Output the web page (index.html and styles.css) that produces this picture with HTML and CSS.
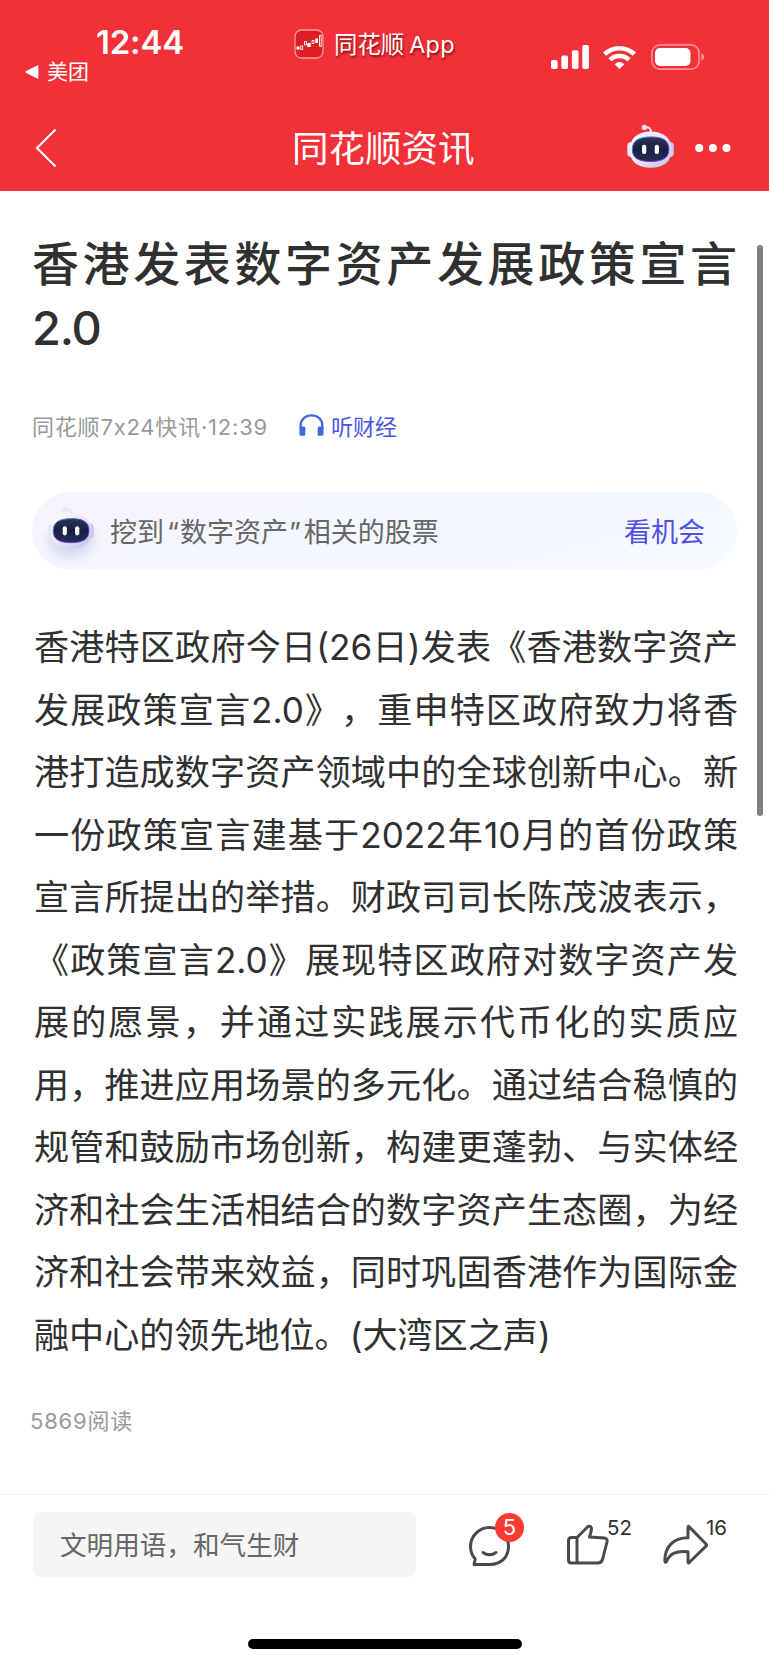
FILE: index.html
```html
<!DOCTYPE html>
<html lang="zh-CN">
<head>
<meta charset="utf-8">
<title>同花顺资讯</title>
<link rel="stylesheet" href="styles.css">
</head>
<body>
<svg class="defs" width="0" height="0" aria-hidden="true">
  <defs>
    <linearGradient id="shell" x1="0" y1="0" x2="1" y2="1"><stop offset="0" stop-color="#fff"/><stop offset=".55" stop-color="#e2e3f7"/><stop offset="1" stop-color="#bfc0e8"/></linearGradient>
    <linearGradient id="rim" x1="0" y1="0" x2="1" y2="1"><stop offset="0" stop-color="#58c8f0"/><stop offset=".4" stop-color="#5a3fc0"/><stop offset="1" stop-color="#8a3df0"/></linearGradient>
    <linearGradient id="visor" x1="0" y1="0" x2="0" y2="1"><stop offset="0" stop-color="#2c3656"/><stop offset=".5" stop-color="#171f42"/><stop offset="1" stop-color="#262d55"/></linearGradient>
    <symbol id="bot" viewBox="0 0 49 46">
      <path d="M19 4.400c4-.6 6 1 6 5" fill="none" stroke="#e4e4f8" stroke-width="2"/>
      <circle cx="18.400" cy="4.400" r="2.700" fill="#e9e9fb"/>
      <rect x="1.300" y="19" width="8" height="15" rx="4" fill="#e6e6fa"/>
      <rect x="39.800" y="19" width="8" height="15" rx="4" fill="#c6c7ee"/>
      <path d="M24.600 8.600C37 8.600 45.800 15 45.800 27c0 12-9 17.800-21.200 17.800S3.600 39 3.600 27c0-12 8.800-18.400 21-18.400z" fill="url(#shell)"/>
      <path d="M24.600 13.900c12 0 18.300 3.500 18.300 12.300s-6.300 12.300-18.300 12.300S6.300 35 6.300 26.200s6.300-12.300 18.300-12.300z" fill="url(#visor)" stroke="url(#rim)" stroke-width="1"/>
      <rect x="16" y="21.700" width="4.300" height="9.400" rx="2.100" fill="#fff"/>
      <rect x="28.700" y="21.700" width="4.300" height="9.400" rx="2.100" fill="#fff"/>
    </symbol>
  </defs>
</svg>
<div class="screen">
  <header class="top">
    <div class="status">
      <div class="clock">
        <div class="time">12:44</div>
        <div class="return"><svg width="14" height="14" viewBox="0 0 14 14"><path d="M12.500 1.200v11.600L1.200 7z" fill="#fff" stroke="#fff" stroke-width="1.800" stroke-linejoin="round"/></svg><span>美团</span></div>
      </div>
      <div class="source">
        <svg width="30" height="30" viewBox="0 0 30 30"><rect x="1" y="1" width="28" height="28" rx="6.500" fill="#dd1f25" stroke="#f79a9c" stroke-width="1.300"/><path d="M2.500 17.500h3v3h-3zM13.300 14h3.400v4h-3.400zM21.300 9.500H24v4.500h-2.700z" fill="#fff"/><path d="M6.700 17h2v3.500h-2zM10.500 12.500h2v3.500h-2zM18 11.500h2v3h-2zM25.500 6.500h1.700v11h-1.700z" fill="none" stroke="#fff" stroke-width=".9"/></svg>
        <span>同花顺<span class="latin">App</span></span>
      </div>
      <div class="signals">
        <svg width="38" height="24" viewBox="0 0 38 24" fill="#fff"><rect y="15" width="6.600" height="9" rx="1.800"/><rect x="10.400" y="10.500" width="6.600" height="13.500" rx="1.800"/><rect x="20.900" y="5.300" width="6.600" height="18.700" rx="1.800"/><rect x="31.300" y="0" width="6.600" height="24" rx="1.800"/></svg>
        <svg width="33" height="24" viewBox="0 0 33 24" fill="none" stroke="#fff"><path d="M1.600 9.200a21.500 21.500 0 0 1 29.800 0" stroke-width="4.600"/><path d="M7 14.900a13.700 13.700 0 0 1 19 0" stroke-width="4.600"/><path d="M11.600 19.200q4.900-4.300 9.800 0l-4.900 4.800z" fill="#fff" stroke="none"/></svg>
        <svg width="54" height="26" viewBox="0 0 54 26"><rect x=".9" y=".9" width="47.200" height="24.200" rx="8" fill="none" stroke="#fa9295" stroke-width="1.600"/><rect x="4" y="4" width="35.500" height="18" rx="5" fill="#fff"/><path d="M50.300 9.300q3 1.300 3 3.700t-3 3.700z" fill="#fa9295"/></svg>
      </div>
    </div>
    <nav class="nav">
      <svg class="back" width="22" height="40" viewBox="0 0 22 40"><path d="M20.500 1.500L2 20l18.500 18.500" fill="none" stroke="#fff" stroke-width="2.200"/></svg>
      <h1 class="channel">同花顺资讯</h1>
      <div class="tools">
        <svg class="tools-bot" width="49" height="46"><use href="#bot"/></svg>
        <svg width="36" height="8" viewBox="0 0 36 8" fill="#fff"><circle cx="4.200" cy="4" r="4"/><circle cx="17.900" cy="4" r="4"/><circle cx="31.500" cy="4" r="4"/></svg>
      </div>
    </nav>
  </header>

  <main class="article">
    <h2 class="headline"><span>香港发表数字资产发展政策宣言</span><span class="version">2.0</span></h2>
    <div class="meta">
      <span class="origin">同花顺7x24快讯·12:39</span>
      <a class="listen"><svg width="25" height="22" viewBox="0 0 25 22"><path d="M1.600 15v-3.500C1.600 5.200 6.500 1.300 12.500 1.300s10.900 3.900 10.900 10.200V15" fill="none" stroke="#4068e0" stroke-width="2.300"/><rect x=".5" y="12.500" width="5.800" height="9.200" rx="1.500" fill="#4068e0"/><rect x="18.700" y="12.500" width="5.800" height="9.200" rx="1.500" fill="#4068e0"/></svg><span>听财经</span></a>
    </div>
    <div class="promo">
      <svg class="promo-bot" width="48" height="45"><use href="#bot"/></svg>
      <span class="promo-text">挖到<span class="open">“</span>数字资产<span class="close">”</span>相关的股票</span>
      <a class="promo-link">看机会</a>
    </div>
    <p class="body">
      <span>香港特区政府今日(26日)发表《香港数字资产</span>
      <span>发展政策宣言2.0》，重申特区政府致力将香</span>
      <span>港打造成数字资产领域中的全球创新中心。新</span>
      <span>一份政策宣言建基于2022年10月的首份政策</span>
      <span>宣言所提出的举措。财政司司长陈茂波表示，</span>
      <span>《政策宣言2.0》展现特区政府对数字资产发</span>
      <span>展的愿景，并通过实践展示代币化的实质应</span>
      <span>用，推进应用场景的多元化。通过结合稳慎的</span>
      <span>规管和鼓励市场创新，构建更蓬勃、与实体经</span>
      <span>济和社会生活相结合的数字资产生态圈，为经</span>
      <span>济和社会带来效益，同时巩固香港作为国际金</span>
      <span class="last">融中心的领先地位。(大湾区之声)</span>
    </p>
    <div class="reads">5869阅读</div>
  </main>
  <div class="scrollbar"></div>

  <footer class="bottom">
    <div class="actions">
      <div class="comment-box">文明用语，和气生财</div>
      <div class="action comment">
        <svg width="42" height="42" viewBox="0 0 42 42" fill="none" stroke="#4a4a4a" stroke-width="3" stroke-linejoin="round" stroke-linecap="round"><path d="M5 39.500l1.300-5.500C3 30.500 1.500 26.500 1.500 21.500a19 19 0 0 1 38 0c0 10.500-7.500 18-18.500 18z"/><path d="M14 27.500q6.500 4.500 13 0"/></svg>
        <span class="badge">5</span>
      </div>
      <div class="action like">
        <svg width="42" height="40" viewBox="0 0 42 40" fill="none" stroke="#4a4a4a" stroke-width="3" stroke-linejoin="round" stroke-linecap="round"><path d="M10 12.500H4.500q-3 0-3 3v19.500q0 3 3 3H30.500q4 0 5-3.500l4.500-17.500q.8-3.500-2.800-4L22.500 12q1.500-4 2-8 0-3.500-3.500-2.500L10 12.500V38"/></svg>
        <span class="count">52</span>
      </div>
      <div class="action share">
        <svg width="46" height="40" viewBox="0 0 46 40" fill="none" stroke="#4a4a4a" stroke-width="3" stroke-linejoin="round"><path d="M25 2.200q0-1.500 1.200-.3L43 19q1.200 1.200 0 2.200L26.200 37.500q-1.200 1-1.200-.4V26.700C13 25.500 7 28.500 3.500 36.500q-1.500 2-1.700-1C2 22 10 12.800 25 12.800z"/></svg>
        <span class="count">16</span>
      </div>
    </div>
    <div class="home"></div>
  </footer>
</div>
</body>
</html>
```

FILE: styles.css
```css
* { box-sizing: border-box; }
body {
  margin: 0;
  background: #fff;
  color: #303030;
  font-family: Inter, "Noto Sans CJK SC", sans-serif;
  text-spacing-trim: space-all;
}
svg { display: block; flex: none; overflow: visible; }
.defs { position: absolute; }
.screen {
  position: relative;
  display: flex;
  flex-direction: column;
  width: 769px;
  height: 1665px;
  overflow: hidden;
  white-space: nowrap;
}

.top { height: 191px; flex: none; background: #f23038; color: #fff; }
.status { display: grid; grid-template-columns: 294px 257px 1fr; height: 104px; }
.clock { padding: 24px 0 0 25px; }
.time { padding-left: 71px; font-size: 33px; font-weight: 600; line-height: 36px; letter-spacing: -.2px; }
.return { display: flex; align-items: center; gap: 8px; height: 24px; font-size: 21px; line-height: 24px; }
.source { display: flex; align-items: center; gap: 10px; height: 30px; margin-top: 29px; font-size: 23.400px; text-shadow: 1px 2px 2px rgba(90, 0, 0, .65); }
.source > span { margin-top: -2px; }
.latin { margin-left: 5px; letter-spacing: .3px; }
.signals { display: flex; align-items: center; height: 26px; margin-top: 44px; }
.signals svg:nth-child(2) { margin: 0 15px 0 14px; }
.nav { display: grid; grid-template-columns: 292px 334px 1fr; align-items: center; height: 87px; }
.back { margin-left: 35px; }
.channel { margin: 2px 0 0; font-size: 36.500px; font-weight: 400; line-height: 50px; }
.tools { display: flex; align-items: center; gap: 20px; }
.tools-bot { margin-top: -3px; }

.article { flex: none; height: 1303px; padding: 41px 32px 0; }
.headline { margin: 0; width: 705px; font-size: 47px; font-weight: 500; line-height: 64px; }
.headline span { display: block; }
.headline span:first-child { text-align-last: justify; }
.headline .version { letter-spacing: -1.200px; }
.meta { display: flex; align-items: center; height: 30px; margin-top: 50px; font-size: 22px; color: #999; }
.origin { width: 267px; letter-spacing: .8px; }
.listen { display: flex; align-items: center; gap: 7px; color: #4a52e6; }
.promo {
  display: flex;
  align-items: center;
  width: 705px;
  height: 78px;
  margin-top: 52px;
  padding: 0 32px 2px 15px;
  border-radius: 39px;
  background: linear-gradient(165deg, #f8f3fe 0%, #f4f6fe 35%, #f3f8ff 70%, #f5fcff 100%);
  font-size: 27px;
}
.promo-bot { margin-top: -6px; filter: drop-shadow(0 9px 5px rgba(90, 100, 190, .18)); }
.promo-text { margin-left: 15px; color: #666; }
.open { margin: 0 1px 0 3px; }
.close { margin: 0 3px 0 1px; }
.promo-link { margin-left: auto; color: #5250e6; }
.body { width: 704px; margin: 46px 0 0 2px; font-size: 35.100px; line-height: 62.500px; }
.body span { display: block; text-align-last: justify; }
.body .last { text-align-last: left; }
.reads { margin: 40px 0 0 -2px; font-size: 22px; line-height: 30px; letter-spacing: .8px; color: #999; }
.scrollbar { position: absolute; top: 245px; left: 757px; width: 6px; height: 571px; border-radius: 3px; background: #808080; }

.bottom { flex: 1; border-top: 1px solid #eee; }
.actions { display: flex; height: 82px; padding: 17px 0 0 33px; }
.comment-box { width: 383px; height: 65px; padding-left: 27px; border-radius: 8px; background: #f5f5f5; color: #666; font-size: 26.600px; line-height: 66px; }
.action { position: relative; height: 42px; margin-top: 13px; }
.comment { margin-left: 53px; }
.like { margin-left: 56px; }
.share { margin-left: 54px; }
.badge { position: absolute; left: 26px; top: -12px; width: 29px; height: 29px; border-radius: 50%; background: #ff3a33; color: #fff; font-size: 22px; line-height: 29px; text-align: center; }
.count { position: absolute; left: 40px; top: -11px; font-size: 20.500px; line-height: 28px; }
.share .count { left: 43px; }
.home { width: 274px; height: 10px; margin: 62px 0 0 248px; border-radius: 5px; background: #000; }
```
